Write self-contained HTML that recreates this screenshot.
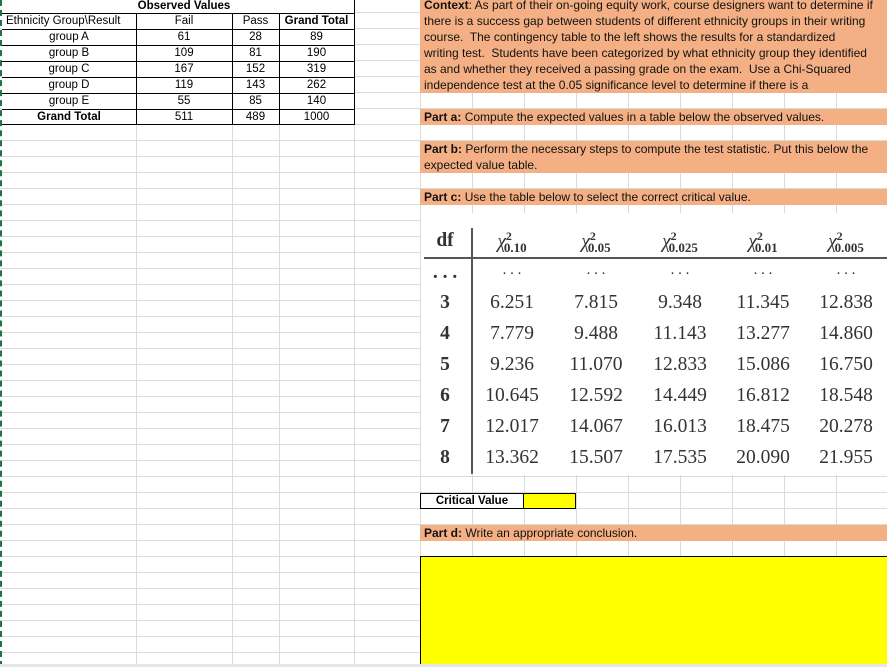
<!DOCTYPE html>
<html><head><meta charset="utf-8"><style>
*{margin:0;padding:0;box-sizing:border-box}
body{width:887px;height:667px;overflow:hidden;position:relative;background:#fff;font-family:"Liberation Sans",sans-serif;font-size:12px;color:#000}
.grid{position:absolute;left:0;top:0;width:887px;height:667px;
background-image:repeating-linear-gradient(to bottom,transparent 0,transparent 12px,#dadada 12px,#dadada 13px,transparent 13px,transparent 16px);}
.v{position:absolute;top:0;width:1px;height:667px;background:#dadada}
.c{position:absolute;text-align:center;height:16px;line-height:16px;white-space:nowrap;font-size:11.5px}
.hl{position:absolute;height:1px;background:#000}
.vl{position:absolute;width:1px;background:#000}
.or{position:absolute;background:#f4b084;left:420px;width:467px;font-size:12px;padding-left:4px;white-space:nowrap;color:#111}
.chi{position:absolute;font-family:"Liberation Serif",serif;font-size:19.5px;color:#333;text-align:center;width:80px}
</style></head><body>
<div class="grid"></div>
<div class="v" style="left:136px"></div><div class="v" style="left:232px"></div><div class="v" style="left:279px"></div><div class="v" style="left:354px"></div><div class="v" style="left:420px"></div><div class="v" style="left:472px"></div><div class="v" style="left:524px"></div><div class="v" style="left:576px"></div><div class="v" style="left:628px"></div><div class="v" style="left:680px"></div><div class="v" style="left:732px"></div><div class="v" style="left:784px"></div><div class="v" style="left:836px"></div>
<div style="position:absolute;left:0;top:0;width:2px;height:667px;border-left:2px dashed #217346"></div>
<div style="position:absolute;left:2px;top:0;width:352px;height:125px;background:#fff"></div>
<div class="hl" style="left:2px;top:13px;width:352px"></div>
<div class="hl" style="left:2px;top:124px;width:352px"></div>
<div class="vl" style="left:354px;top:0;height:125px"></div>
<div class="vl" style="left:136px;top:13px;height:112px"></div>
<div class="vl" style="left:232px;top:13px;height:112px"></div>
<div class="vl" style="left:279px;top:13px;height:112px"></div>
<div class="hl" style="left:2px;top:29px;width:352px"></div>
<div class="hl" style="left:2px;top:45px;width:352px"></div>
<div class="hl" style="left:2px;top:61px;width:352px"></div>
<div class="hl" style="left:2px;top:77px;width:352px"></div>
<div class="hl" style="left:2px;top:93px;width:352px"></div>
<div class="hl" style="left:2px;top:109px;width:352px"></div>
<div class="c" style="left:136px;width:96px;top:-2px;font-weight:bold">Observed Values</div>
<div class="c" style="left:6px;width:132px;top:13px;text-align:left">Ethnicity Group\Result</div>
<div class="c" style="left:136px;width:96px;top:13px">Fail</div>
<div class="c" style="left:232px;width:47px;top:13px">Pass</div>
<div class="c" style="left:279px;width:75px;top:13px;font-weight:bold">Grand Total</div>
<div class="c" style="left:2px;width:134px;top:29px">group A</div><div class="c" style="left:136px;width:96px;top:29px">61</div><div class="c" style="left:232px;width:47px;top:29px">28</div><div class="c" style="left:279px;width:75px;top:29px">89</div>
<div class="c" style="left:2px;width:134px;top:45px">group B</div><div class="c" style="left:136px;width:96px;top:45px">109</div><div class="c" style="left:232px;width:47px;top:45px">81</div><div class="c" style="left:279px;width:75px;top:45px">190</div>
<div class="c" style="left:2px;width:134px;top:61px">group C</div><div class="c" style="left:136px;width:96px;top:61px">167</div><div class="c" style="left:232px;width:47px;top:61px">152</div><div class="c" style="left:279px;width:75px;top:61px">319</div>
<div class="c" style="left:2px;width:134px;top:77px">group D</div><div class="c" style="left:136px;width:96px;top:77px">119</div><div class="c" style="left:232px;width:47px;top:77px">143</div><div class="c" style="left:279px;width:75px;top:77px">262</div>
<div class="c" style="left:2px;width:134px;top:93px">group E</div><div class="c" style="left:136px;width:96px;top:93px">55</div><div class="c" style="left:232px;width:47px;top:93px">85</div><div class="c" style="left:279px;width:75px;top:93px">140</div>
<div class="c" style="left:2px;width:134px;top:109px;font-weight:bold">Grand Total</div><div class="c" style="left:136px;width:96px;top:109px">511</div><div class="c" style="left:232px;width:47px;top:109px">489</div><div class="c" style="left:279px;width:75px;top:109px">1000</div>
<div class="or" style="top:0;height:93px;line-height:16px">
<div style="margin-top:-3px"><b>Context</b>: As part of their on-going equity work, course designers want to determine if</div>
<div>there is a success gap between students of different ethnicity groups in their writing</div>
<div>course.&nbsp; The contingency table to the left shows the results for a standardized</div>
<div>writing test.&nbsp; Students have been categorized by what ethnicity group they identified</div>
<div>as and whether they received a passing grade on the exam.&nbsp; Use a Chi-Squared</div>
<div>independence test at the 0.05 significance level to determine if there is a</div>
</div>
<div class="or" style="top:109px;height:16px;line-height:16px"><b>Part a:</b> Compute the expected values in a table below the observed values.</div>
<div class="or" style="top:141px;height:32px;line-height:16px"><b>Part b:</b> Perform the necessary steps to compute the test statistic. Put this below the<br>expected value table.</div>
<div class="or" style="top:189px;height:16px;line-height:16px"><b>Part c:</b> Use the table below to select the correct critical value.</div>
<div style="position:absolute;left:421px;top:213px;width:466px;height:262px;background:#fff"></div>
<div style="position:absolute;left:424px;top:257px;width:463px;height:2px;background:#555"></div>
<div style="position:absolute;left:471px;top:228px;width:2px;height:246px;background:#555"></div>
<div class="chi" style="left:405px;top:230px;font-weight:bold">df</div>
<div class="chi" style="left:472px;top:229px;font-style:italic">χ<sup style="font-size:12px;font-weight:bold;font-style:normal">2</sup><sub style="font-size:13px;font-weight:bold;font-style:normal;margin-left:-8px">0.10</sub></div>
<div class="chi" style="left:556px;top:229px;font-style:italic">χ<sup style="font-size:12px;font-weight:bold;font-style:normal">2</sup><sub style="font-size:13px;font-weight:bold;font-style:normal;margin-left:-8px">0.05</sub></div>
<div class="chi" style="left:640px;top:229px;font-style:italic">χ<sup style="font-size:12px;font-weight:bold;font-style:normal">2</sup><sub style="font-size:13px;font-weight:bold;font-style:normal;margin-left:-8px">0.025</sub></div>
<div class="chi" style="left:723px;top:229px;font-style:italic">χ<sup style="font-size:12px;font-weight:bold;font-style:normal">2</sup><sub style="font-size:13px;font-weight:bold;font-style:normal;margin-left:-8px">0.01</sub></div>
<div class="chi" style="left:806px;top:229px;font-style:italic">χ<sup style="font-size:12px;font-weight:bold;font-style:normal">2</sup><sub style="font-size:13px;font-weight:bold;font-style:normal;margin-left:-8px">0.005</sub></div>
<div class="chi" style="left:405px;top:262px;font-weight:bold">. . .</div>
<div class="chi" style="left:472px;top:262px;font-size:15px">. . .</div><div class="chi" style="left:556px;top:262px;font-size:15px">. . .</div><div class="chi" style="left:640px;top:262px;font-size:15px">. . .</div><div class="chi" style="left:723px;top:262px;font-size:15px">. . .</div><div class="chi" style="left:806px;top:262px;font-size:15px">. . .</div>
<div class="chi" style="left:405px;top:292px;font-weight:bold">3</div><div class="chi" style="left:472px;top:292px">6.251</div><div class="chi" style="left:556px;top:292px">7.815</div><div class="chi" style="left:640px;top:292px">9.348</div><div class="chi" style="left:723px;top:292px">11.345</div><div class="chi" style="left:806px;top:292px">12.838</div>
<div class="chi" style="left:405px;top:323px;font-weight:bold">4</div><div class="chi" style="left:472px;top:323px">7.779</div><div class="chi" style="left:556px;top:323px">9.488</div><div class="chi" style="left:640px;top:323px">11.143</div><div class="chi" style="left:723px;top:323px">13.277</div><div class="chi" style="left:806px;top:323px">14.860</div>
<div class="chi" style="left:405px;top:354px;font-weight:bold">5</div><div class="chi" style="left:472px;top:354px">9.236</div><div class="chi" style="left:556px;top:354px">11.070</div><div class="chi" style="left:640px;top:354px">12.833</div><div class="chi" style="left:723px;top:354px">15.086</div><div class="chi" style="left:806px;top:354px">16.750</div>
<div class="chi" style="left:405px;top:385px;font-weight:bold">6</div><div class="chi" style="left:472px;top:385px">10.645</div><div class="chi" style="left:556px;top:385px">12.592</div><div class="chi" style="left:640px;top:385px">14.449</div><div class="chi" style="left:723px;top:385px">16.812</div><div class="chi" style="left:806px;top:385px">18.548</div>
<div class="chi" style="left:405px;top:416px;font-weight:bold">7</div><div class="chi" style="left:472px;top:416px">12.017</div><div class="chi" style="left:556px;top:416px">14.067</div><div class="chi" style="left:640px;top:416px">16.013</div><div class="chi" style="left:723px;top:416px">18.475</div><div class="chi" style="left:806px;top:416px">20.278</div>
<div class="chi" style="left:405px;top:447px;font-weight:bold">8</div><div class="chi" style="left:472px;top:447px">13.362</div><div class="chi" style="left:556px;top:447px">15.507</div><div class="chi" style="left:640px;top:447px">17.535</div><div class="chi" style="left:723px;top:447px">20.090</div><div class="chi" style="left:806px;top:447px">21.955</div>
<div class="c" style="left:420px;top:493px;width:104px;border:1px solid #000;background:#fff;font-weight:bold;line-height:14px">Critical Value</div>
<div style="position:absolute;left:523px;top:493px;width:53px;height:16px;border:1px solid #000;background:#ff0"></div>
<div class="or" style="top:525px;height:16px;line-height:16px"><b>Part d:</b> Write an appropriate conclusion.</div>
<div style="position:absolute;left:420px;top:556px;width:467px;height:110px;background:#ff0;border-left:1px solid #000;border-top:1px solid #000"></div>
<div style="position:absolute;left:0;top:664px;width:887px;height:3px;background:#e6e6e6"></div>
</body></html>
